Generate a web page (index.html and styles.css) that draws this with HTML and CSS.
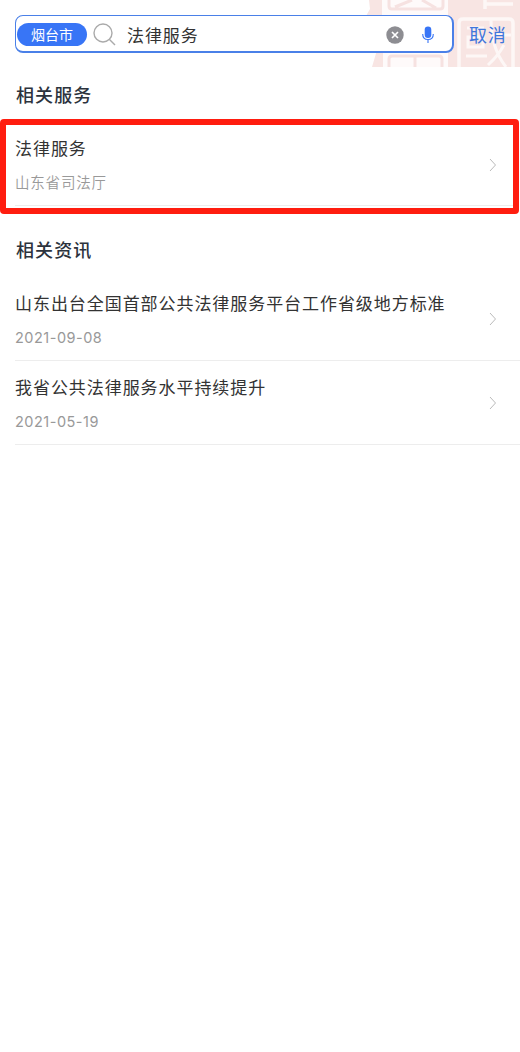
FILE: index.html
```
<!DOCTYPE html>
<html lang="zh-CN">
<head>
    <meta charset="UTF-8">
    <meta name="viewport" content="width=device-width, initial-scale=1.0">
    <title>法律服务</title>
    <link rel="stylesheet" href="styles.css">
</head>
<body>
    <header class="header">
        <svg class="seal" width="154" height="67" viewBox="0 0 154 67">
            <path fill="#fefafa" d="M14 0H88V67H14Z"/>
            <path fill="#f8e5e3" d="M3 0H16V16H0L4 9ZM11 50H17V67H6ZM82 0H154V67H82Z"/>
            <g fill="none" stroke="#f6e2e1" stroke-width="3">
                <path d="M23 0V6Q23 9 26 9H74Q77 9 77 6V0M29 7L46 0M56 0L70 8"/>
                <path d="M23 67V59Q23 56 26 56H73Q76 56 76 59V67M49 56V67"/>
            </g>
            <g fill="none" stroke="#fdf7f6" stroke-width="3.5">
                <path d="M119 0V9M119 4H147"/>
                <path d="M93 67V23Q93 19 97 19H143Q147 19 147 23V67"/>
                <path d="M101 28H118M102 37H117V47H102ZM100 56H121M125 20Q125 48 140 67M125 35H145M138 45Q132 56 122 65" stroke-width="3"/>
            </g>
        </svg>
        <div class="search-box">
            <span class="city">烟台市</span>
            <svg class="search-icon" width="24" height="24" viewBox="0 0 24 24" fill="none" stroke="#aaa" stroke-width="1.4">
                <circle cx="10" cy="10" r="9"/>
                <path d="M16.5 16.5L22 22"/>
            </svg>
            <span class="keyword">法律服务</span>
            <svg class="clear-icon" width="18" height="18" viewBox="0 0 18 18">
                <circle cx="9" cy="9" r="8.7" fill="#8d8d92"/>
                <path d="M6 6L12 12M12 6L6 12" stroke="#fff" stroke-width="1.7"/>
            </svg>
            <svg class="mic-icon" width="12" height="18" viewBox="0 0 12 18">
                <rect x="2.7" y="0.5" width="6.6" height="11.5" rx="3.3" fill="#3875f6"/>
                <path d="M0.7 8Q0.7 13.5 6 13.5T11.3 8M6 13.5V17" fill="none" stroke="#3875f6" stroke-width="1.1"/>
            </svg>
        </div>
        <span class="cancel">取消</span>
    </header>

    <h2 class="section-title">相关服务</h2>
    <div class="highlight">
        <div class="item">
            <div class="item-text">
                <div class="item-title">法律服务</div>
                <div class="item-desc">山东省司法厅</div>
            </div>
            <svg class="arrow" width="8" height="14" viewBox="0 0 8 14"><path d="M1 1L6.5 7L1 13"/></svg>
        </div>
    </div>

    <h2 class="section-title news-title">相关资讯</h2>
    <div class="list">
        <div class="item">
            <div class="item-text">
                <div class="item-title">山东出台全国首部公共法律服务平台工作省级地方标准</div>
                <div class="item-desc date">2021-09-08</div>
            </div>
            <svg class="arrow" width="8" height="14" viewBox="0 0 8 14"><path d="M1 1L6.5 7L1 13"/></svg>
        </div>
        <div class="item">
            <div class="item-text">
                <div class="item-title">我省公共法律服务水平持续提升</div>
                <div class="item-desc date">2021-05-19</div>
            </div>
            <svg class="arrow" width="8" height="14" viewBox="0 0 8 14"><path d="M1 1L6.5 7L1 13"/></svg>
        </div>
    </div>
</body>
</html>
```
FILE: styles.css
```
* {
    box-sizing: border-box;
}

body {
    margin: 0;
    background-color: #fff;
    color: #333;
    font-family: "Noto Sans CJK SC", sans-serif;
}

.header {
    position: relative;
    display: flex;
    align-items: flex-start;
    height: 67px;
    padding: 15px 0 0 15px;
}

/* pale seal behind the search bar */
.seal {
    position: absolute;
    top: 0;
    right: 0;
}

.search-box {
    position: relative;
    display: flex;
    align-items: center;
    width: 439px;
    height: 38px;
    padding: 2px 18px 0 1px;
    border: 1px solid #4a80e8;
    border-width: 1px 2px 2px 1px;
    border-radius: 8px;
    background-color: #fff;
}

.city {
    width: 70px;
    height: 23px;
    border-radius: 12px;
    background-color: #3875f6;
    color: #fff;
    font-size: 14px;
    line-height: 22px;
    text-align: center;
}

.search-icon {
    margin-left: 6px;
}

.keyword {
    flex: 1;
    margin-left: 10px;
    color: #333;
    font-size: 17px;
    line-height: 24px;
    letter-spacing: 0.9px;
}

.mic-icon {
    margin-left: 18px;
}

.cancel {
    position: relative;
    margin-left: 15px;
    color: #3f76dc;
    font-size: 18px;
    line-height: 38px;
    letter-spacing: 0.7px;
}

.section-title {
    margin: 0;
    padding: 13px 16px 0;
    height: 52px;
    color: #2c333d;
    font-size: 18px;
    font-weight: 500;
    line-height: 28px;
    letter-spacing: 1.1px;
}

.highlight {
    width: 519px;
    height: 95px;
    border: 6px solid #ff1d0f;
    border-radius: 4px;
    padding-left: 9px;
}

.news-title {
    height: 63px;
    padding-top: 21px;
}

.list {
    padding-left: 15px;
}

.item {
    display: flex;
    align-items: center;
    justify-content: space-between;
    height: 84px;
    padding-right: 23px;
    border-bottom: 1px solid #ededed;
}

.highlight .item {
    height: 81px;
    padding-right: 16px;
}

.item-text {
    padding-top: 2px;
}

.highlight .item-text {
    margin-top: -3px;
}

.arrow {
    fill: none;
    stroke: #bbb;
    stroke-width: 1;
}

.item-title {
    font-size: 17px;
    line-height: 26px;
    letter-spacing: 0.94px;
}

.item-desc {
    margin-top: 9px;
    color: #999;
    font-size: 14.5px;
    font-weight: 350;
    line-height: 24px;
    letter-spacing: 0.8px;
}

.date {
    padding-top: 1px;
    margin-bottom: -1px;
    font-family: Inter, sans-serif;
    font-size: 14.5px;
    font-weight: 400;
    letter-spacing: 0.5px;
}
```
